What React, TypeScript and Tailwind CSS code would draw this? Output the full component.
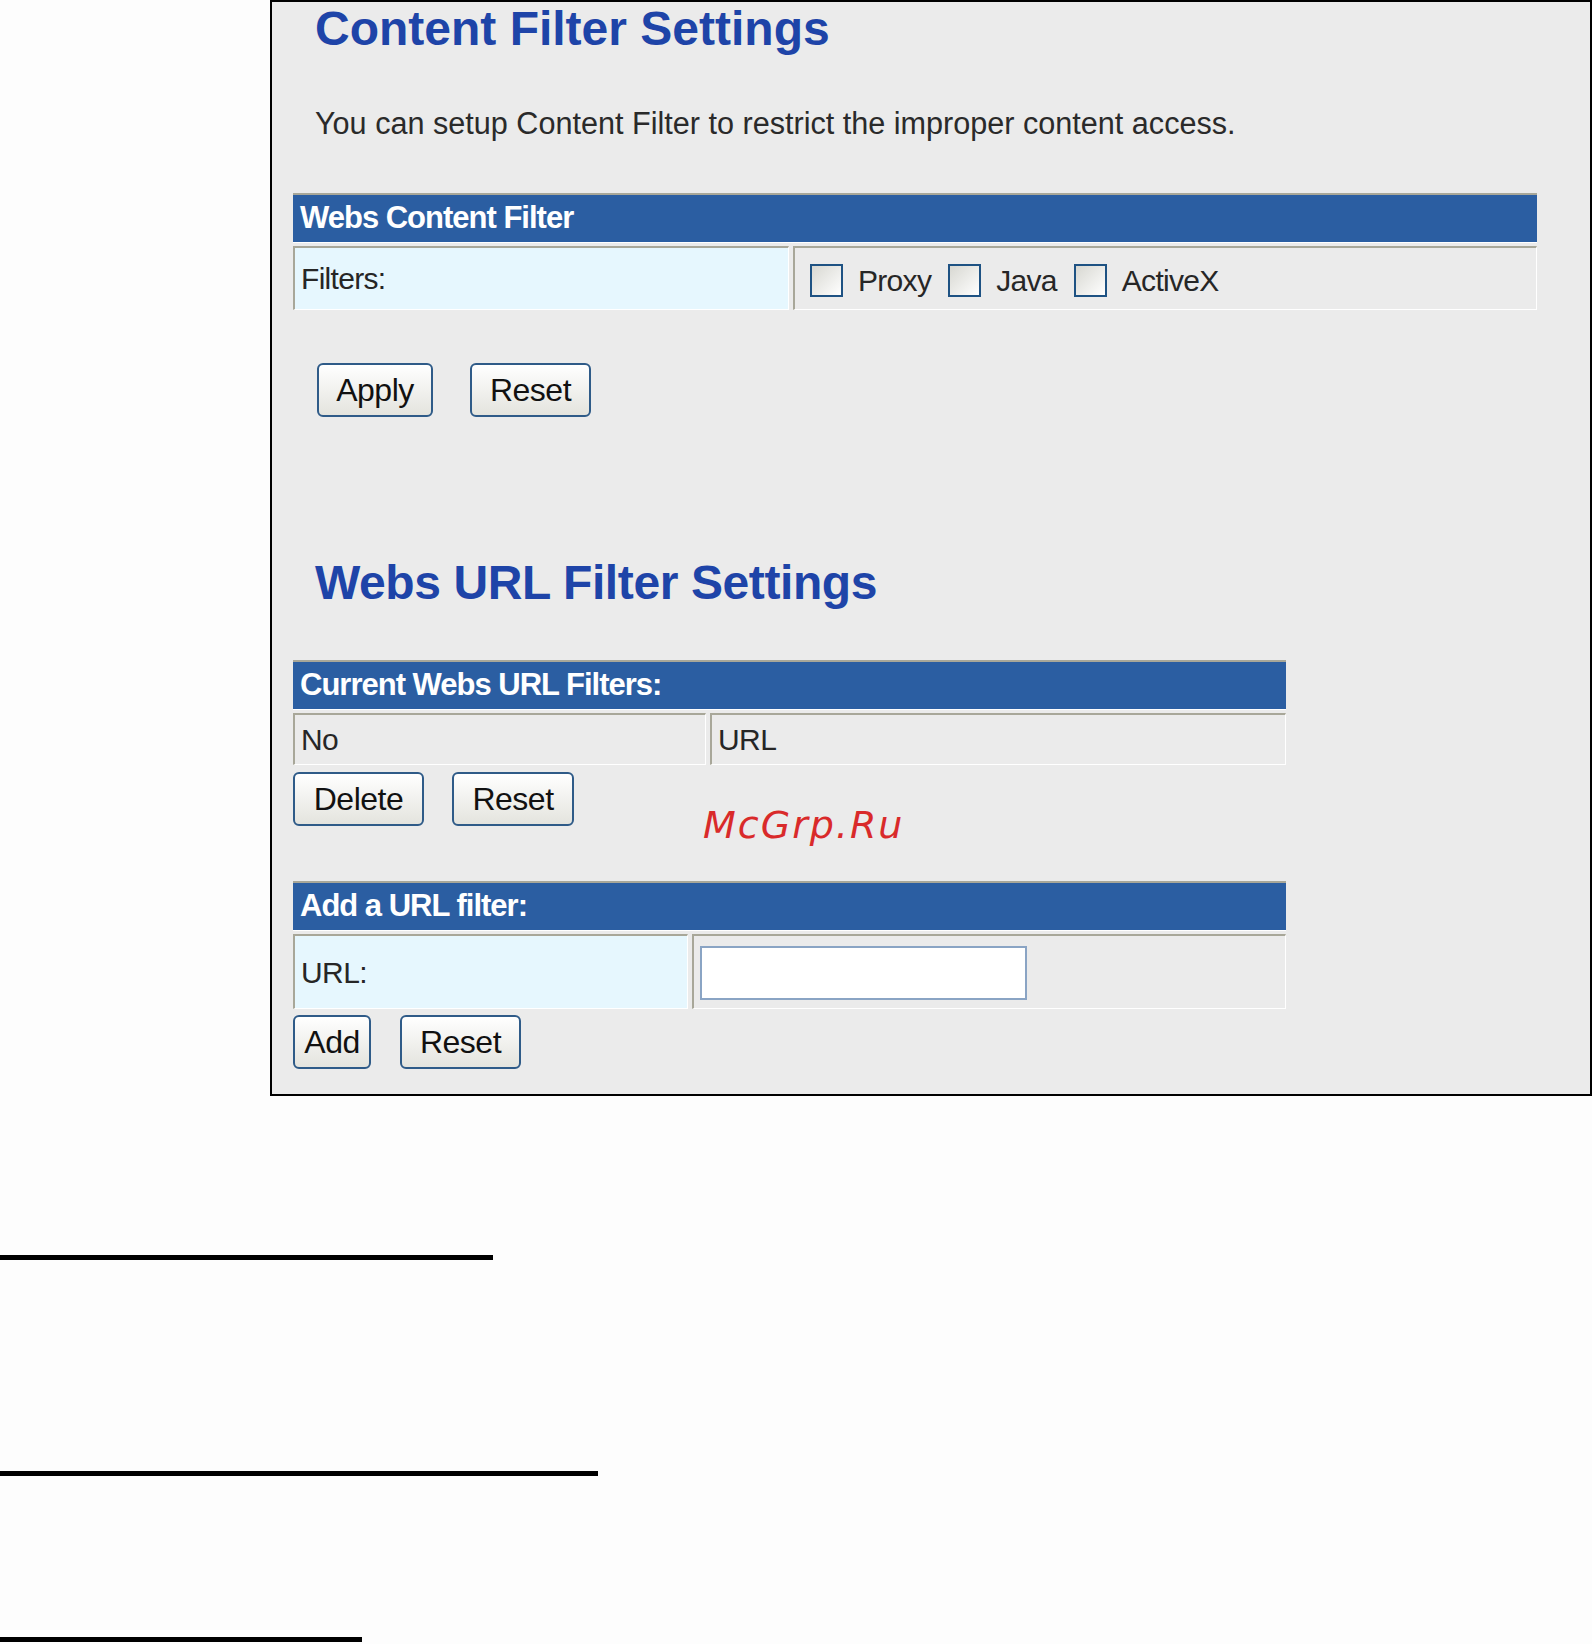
import type { ReactNode } from 'react';

const cell = 'border-t-2 border-l-2 border-r border-b border-t-[#a8a799] border-l-[#a8a799] border-r-white border-b-white';

function Btn({ w, children }: { w: string; children: ReactNode }) {
  return (
    <button
      className={`${w} h-[54px] rounded-[6px] border-2 border-[#2f5b88] bg-gradient-to-b from-white to-[#e4e4de] text-[32px] leading-none text-[#111] tracking-[-0.5px]`}
    >
      {children}
    </button>
  );
}

function Header({ children }: { children: ReactNode }) {
  return (
    <div className="h-[50px] border-t-2 border-b border-t-[#a8a799] border-b-white bg-[#2b5ea2] pl-[7px] flex items-center text-white font-bold text-[31px] tracking-[-1px]">
      {children}
    </div>
  );
}

function Check({ label }: { label: string }) {
  return (
    <span className="flex items-center">
      <span className="w-[33px] h-[33px] border-2 border-[#1e5283] bg-gradient-to-br from-[#d8d8d2] to-white" />
      <span className="ml-[15px]">{label}</span>
    </span>
  );
}

export default function App() {
  return (
    <div className="relative w-[1592px] h-[1644px] bg-[#fdfdfd] text-[#262626] font-['Liberation_Sans',Arial,sans-serif]">
      <div className="ml-[270px] w-[1322px] h-[1096px] border-2 border-black bg-[#ebebeb] flex flex-col">
        <h1 className="mt-[3px] ml-[43px] text-[48px] leading-[48px] font-bold text-[#1e44a8]">
          Content Filter Settings
        </h1>
        <p className="mt-[52px] ml-[43px] text-[30.6px] leading-[36px] text-[#2a2a2a]">
          You can setup Content Filter to restrict the improper content access.
        </p>

        <div className="mt-[52px] ml-[21px] w-[1244px] text-[30px] tracking-[-0.7px]">
          <Header>Webs Content Filter</Header>
          <div className="mt-[3px] flex gap-[4px] h-[64px]">
            <div className={`${cell} w-[496px] bg-[#e6f7fe] pl-[6px] flex items-center`}>Filters:</div>
            <div className={`${cell} flex-1 pl-[15px] pt-[4px] flex items-center gap-[17px]`}>
              <Check label="Proxy" />
              <Check label="Java" />
              <Check label="ActiveX" />
            </div>
          </div>
        </div>

        <div className="mt-[53px] ml-[45px] flex gap-[37px]">
          <Btn w="w-[116px]">Apply</Btn>
          <Btn w="w-[121px]">Reset</Btn>
        </div>

        <h1 className="mt-[142px] ml-[43px] text-[48px] leading-[48px] font-bold text-[#1e44a8] tracking-[-0.4px]">
          Webs URL Filter Settings
        </h1>

        <div className="mt-[53px] ml-[21px] w-[993px] text-[30px] tracking-[-0.6px]">
          <Header>Current Webs URL Filters:</Header>
          <div className="mt-[3px] flex gap-[4px] h-[52px]">
            <div className={`${cell} w-[413px] pl-[6px] flex items-center`}>No</div>
            <div className={`${cell} flex-1 pl-[6px] flex items-center`}>URL</div>
          </div>
          <div className="mt-[7px] flex gap-[28px]">
            <Btn w="w-[131px]">Delete</Btn>
            <Btn w="w-[122px]">Reset</Btn>
          </div>

          <div className="mt-[55px]">
            <Header>Add a URL filter:</Header>
          </div>
          <div className="mt-[3px] flex gap-[4px] h-[75px]">
            <div className={`${cell} w-[395px] bg-[#e6f7fe] pl-[6px] flex items-center`}>URL:</div>
            <div className={`${cell} flex-1 pl-[6px] pt-[10px]`}>
              <input type="text" className="w-[327px] h-[54px] border-2 border-[#8aa4c4] bg-white outline-none" />
            </div>
          </div>
          <div className="mt-[6px] flex gap-[29px]">
            <Btn w="w-[78px]">Add</Btn>
            <Btn w="w-[121px]">Reset</Btn>
          </div>
        </div>
      </div>

      <div className="mt-[159px] w-[493px] h-[5px] bg-black" />
      <div className="mt-[211px] w-[598px] h-[5px] bg-black" />
      <div className="mt-[161px] w-[362px] h-[5px] bg-black" />

      <span className="absolute left-[703px] top-[806px] italic text-[38px] leading-[38px] tracking-[2px] text-[#d92a2a] font-['DejaVu_Sans',sans-serif]">
        McGrp.Ru
      </span>
    </div>
  );
}
